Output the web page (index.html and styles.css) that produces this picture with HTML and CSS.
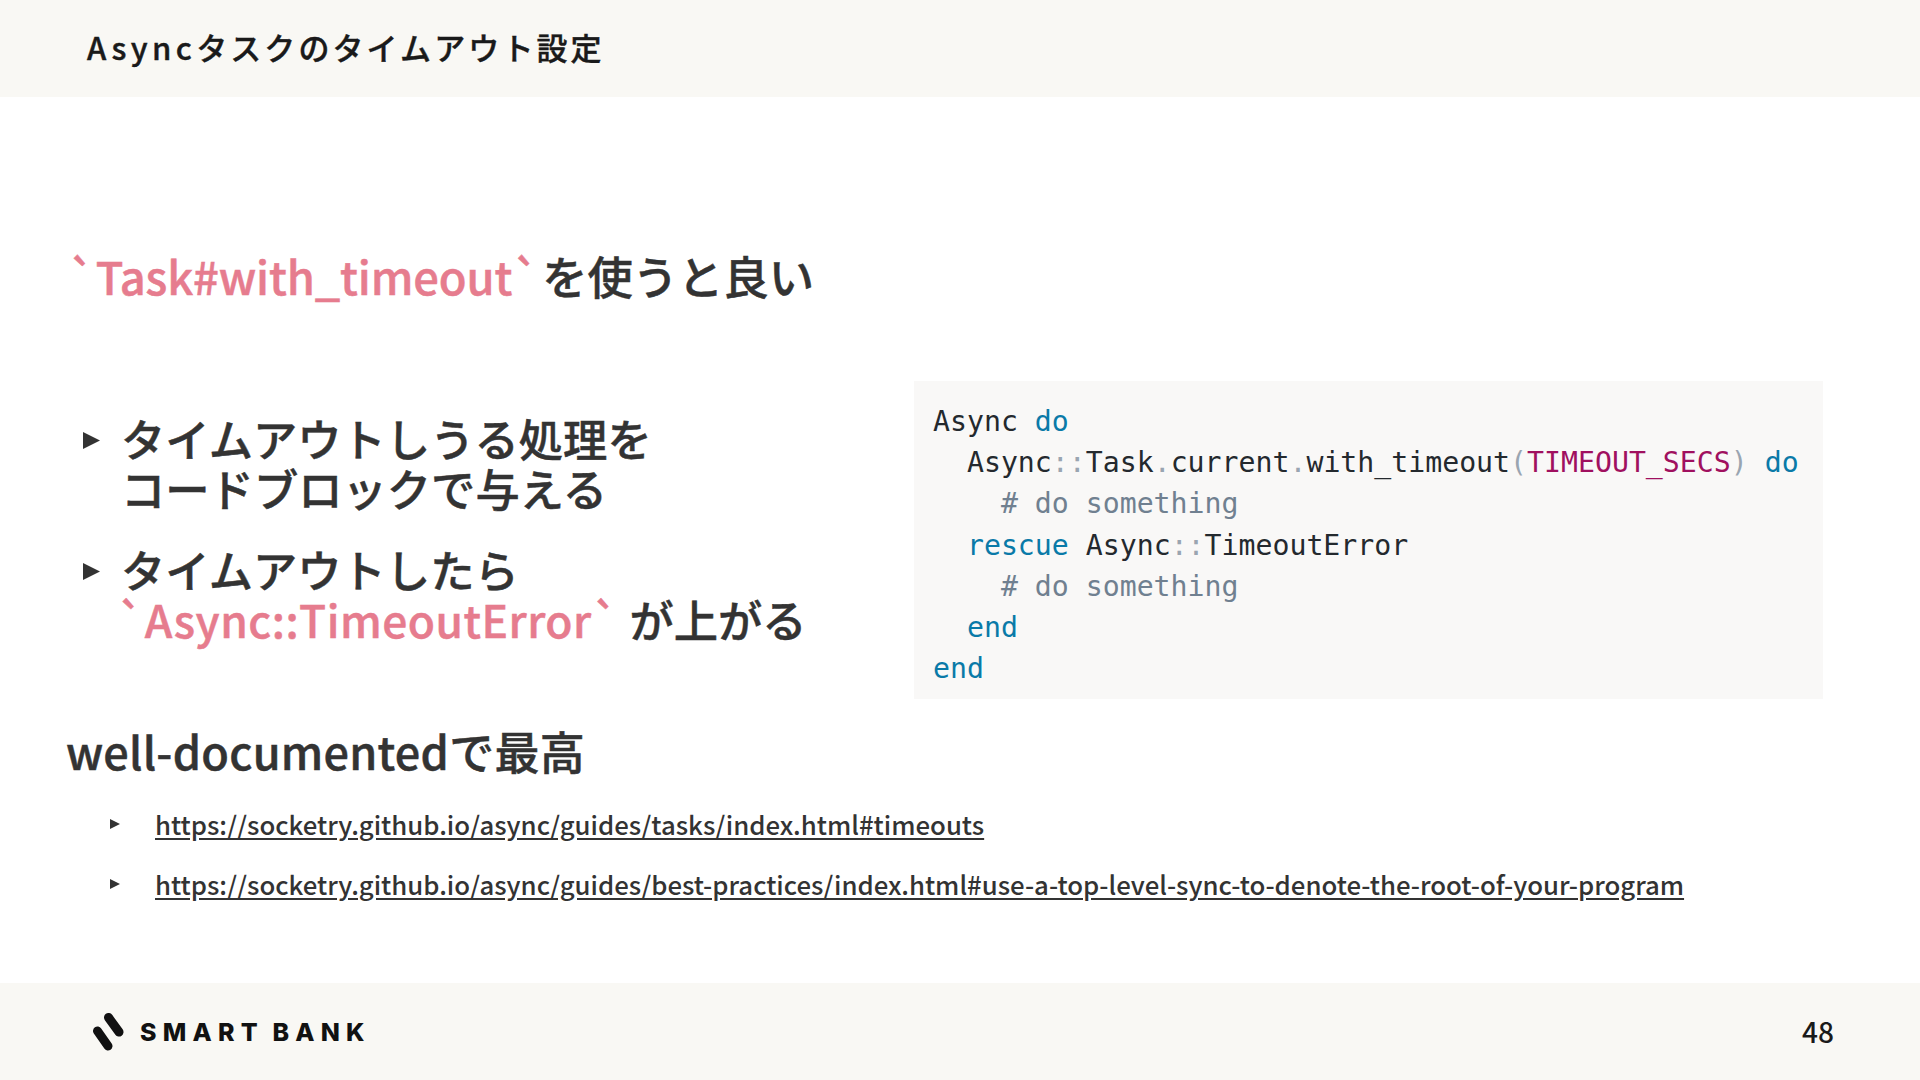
FILE: index.html
```html
<!DOCTYPE html>
<html lang="ja">
<head>
<meta charset="utf-8">
<title>Asyncタスクのタイムアウト設定</title>
<link rel="stylesheet" href="styles.css">
</head>
<body>
<div class="slide">
  <header class="top"><h1 class="title"><span class="latin">Async</span>タスクのタイムアウト設定</h1></header>
  <main class="body">
    <h2 class="lead"><span class="pink tag">`Task#with_timeout`</span> を使うと良い</h2>
    <section class="row">
      <ul class="points">
        <li>タイムアウトしうる処理を<br>コードブロックで与える</li>
        <li>タイムアウトしたら<br><span class="pink err">`Async::TimeoutError`</span> が上がる</li>
      </ul>
      <pre class="code"><span class="tx">Async</span> <span class="kw">do</span>
  <span class="tx">Async</span><span class="pu">::</span><span class="tx">Task</span><span class="pu">.</span><span class="tx">current</span><span class="pu">.</span><span class="tx">with_timeout</span><span class="pu">(</span><span class="cn">TIMEOUT_SECS</span><span class="pu">)</span> <span class="kw">do</span>
    <span class="cm"># do something</span>
  <span class="kw">rescue</span> <span class="tx">Async</span><span class="pu">::</span><span class="tx">TimeoutError</span>
    <span class="cm"># do something</span>
  <span class="kw">end</span>
<span class="kw">end</span></pre>
    </section>
    <h2 class="sub">well-documentedで最高</h2>
    <ul class="links">
      <li><a href="#">https://socketry.github.io/async/guides/tasks/index.html#timeouts</a></li>
      <li><a href="#">https://socketry.github.io/async/guides/best-practices/index.html#use-a-top-level-sync-to-denote-the-root-of-your-program</a></li>
    </ul>
  </main>
  <footer class="bottom">
    <div class="logo">
      <svg class="mark" viewBox="0 0 32 38" width="32" height="38" aria-hidden="true">
        <path d="M16.5 4.5 27 19M5.5 18 16 33" stroke="#111" stroke-width="9" stroke-linecap="round" fill="none"/>
      </svg>
      <span class="brand">SMART BANK</span>
    </div>
    <span class="page">48</span>
  </footer>
</div>
</body>
</html>
```
FILE: styles.css
```css
* { box-sizing: border-box; }
html, body { margin: 0; padding: 0; }
body {
  background: #fff;
  color: #333;
  font-family: "Noto Sans CJK JP", "Noto Sans", sans-serif;
}
.slide {
  width: 1920px;
  height: 1080px;
  display: flex;
  flex-direction: column;
  overflow: hidden;
}
.top {
  height: 97px;
  flex: none;
  background: #f9f8f4;
  display: flex;
  align-items: center;
  padding: 0 0 5px 87px;
}
.title {
  margin: 0;
  font-size: 31px;
  font-weight: 500;
  letter-spacing: 3.1px;
  -webkit-text-stroke: 0.4px #1a1a1a;
  color: #1a1a1a;
}
.latin { letter-spacing: 4.4px; }
.body {
  flex: 1;
  padding: 148px 0 0 68px;
}
.lead, .sub {
  margin: 0;
  font-size: 45.3px;
  line-height: 60px;
  font-weight: 500;
  -webkit-text-stroke: 0.5px;
}
.tag { margin-right: -8px; letter-spacing: -0.15px; }
.pink { color: #e67c8e; }
.err { margin-left: -4px; letter-spacing: 0.5px; }
.row {
  display: flex;
  justify-content: space-between;
  margin-top: 76px;
  padding-right: 97px;
}
.points {
  list-style: none;
  margin: 0;
  padding: 32px 0 0 53px;
  font-size: 44.3px;
  line-height: 50px;
  font-weight: 500;
  -webkit-text-stroke: 0.5px;
}
.points li { position: relative; margin-bottom: 31px; }
.points li::before {
  content: "";
  position: absolute;
  left: -38px;
  top: 19px;
  width: 17px;
  height: 17px;
  background: #333;
  clip-path: polygon(0 0, 100% 50%, 0 100%);
}
.code {
  margin: 0;
  width: 909px;
  height: 318px;
  padding: 20px 19px;
  background: #f9f8f7;
  font-family: "DejaVu Sans Mono", monospace;
  font-size: 28.2px;
  line-height: 41.2px;
}
.tx { color: #24292e; }
.kw { color: #0a7aa8; }
.pu { color: #9aa5b1; }
.cn { color: #a0105f; }
.cm { color: #708090; }
.sub { margin: 22px 0 0 -2px; letter-spacing: 0.25px; font-size: 45px; }
.links {
  list-style: none;
  margin: 25px 0 0;
  padding: 0 0 0 87px;
  font-size: 25.75px;
  line-height: 36px;
  font-weight: 500;
}
.links li { position: relative; margin-bottom: 24px; }
.links li::before {
  content: "";
  position: absolute;
  left: -45px;
  top: 13px;
  width: 10px;
  height: 10px;
  background: #333;
  clip-path: polygon(0 0, 100% 50%, 0 100%);
}
.links a { color: #333; text-decoration: underline; text-underline-offset: 3px; }
.bottom {
  height: 97px;
  flex: none;
  background: #f9f8f4;
  display: flex;
  align-items: center;
  justify-content: space-between;
  padding: 0 86px 0 92px;
}
.logo { display: flex; align-items: center; gap: 16px; }
.mark { display: block; }
.brand {
  font-family: Inter, "Liberation Sans", sans-serif;
  font-weight: 800;
  font-size: 25px;
  letter-spacing: 6.2px;
  word-spacing: -3px;
  color: #111;
}
.page { font-size: 28px; font-weight: 500; color: #1a1a1a; padding-bottom: 2px; }
```
